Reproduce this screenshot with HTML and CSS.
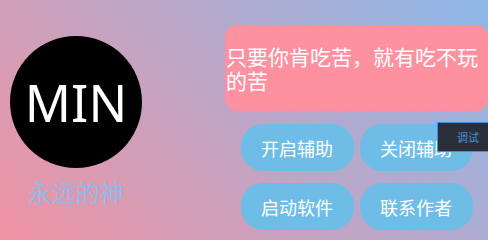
FILE: index.html
```html
<!DOCTYPE html>
<html lang="zh">

<head>
    <meta charset="UTF-8" />
    <meta name="viewport" content="width=device-width, initial-scale=1.0" />
    <title>永远的神</title>
    <link rel="stylesheet" href="styles.css">
</head>

<body>
    <div class="left">
        <div class="avatar">MIN</div>
        <div class="name">永远的神</div>
    </div>
    <div class="right">
        <div class="motto">只要你肯吃苦，就有吃不玩的苦</div>
        <div class="buttons">
            <button>开启辅助</button>
            <button>关闭辅助</button>
            <button>启动软件</button>
            <button>联系作者</button>
        </div>
    </div>
    <div class="debug">调试</div>
</body>

</html>
```

FILE: styles.css
```css
* {
    margin: 0;
    padding: 0;
    box-sizing: border-box;
}

body {
    width: 488px;
    height: 240px;
    overflow: hidden;
    background: linear-gradient(45deg, #f093a3, #8db8e8);
    font-family: "Noto Sans", "Noto Sans CJK SC", sans-serif;
    display: flex;
    flex-direction: row;
}

.left {
    width: 152px;
    padding-top: 36px;
    display: flex;
    flex-direction: column;
    align-items: center;
}

.avatar {
    width: 132px;
    height: 132px;
    border-radius: 50%;
    background-color: #000;
    color: #fff;
    font-size: 51px;
    display: flex;
    align-items: center;
    justify-content: center;
}

.name {
    margin-top: 10px;
    font-size: 24px;
    line-height: 30px;
    color: #8fbbe8;
}

.right {
    margin-left: 73px;
    width: 263px;
    padding-top: 25px;
}

.motto {
    height: 86px;
    border-radius: 12px;
    background-color: #fe919f;
    color: #fff;
    font-size: 21px;
    line-height: 24px;
    padding-left: 1px;
    padding-top: 2px;
    display: flex;
    align-items: center;
}

.buttons {
    margin-top: 13px;
    display: grid;
    grid-template-columns: 113px 113px;
    column-gap: 6px;
    row-gap: 12px;
    justify-content: center;
}

button {
    height: 47px;
    border: none;
    border-radius: 22px;
    background-color: #6ebde6;
    color: #fff;
    font-family: "Noto Sans CJK SC", sans-serif;
    font-size: 18px;
}

.debug {
    position: absolute;
    left: 437px;
    top: 122px;
    width: 55px;
    height: 30px;
    background-color: #2b2f3a;
    border: 1px solid #4a8fd8;
    color: #4a8fd8;
    font-family: "Noto Sans CJK SC", sans-serif;
    font-size: 11px;
    line-height: 28px;
    padding-left: 19px;
}
```
